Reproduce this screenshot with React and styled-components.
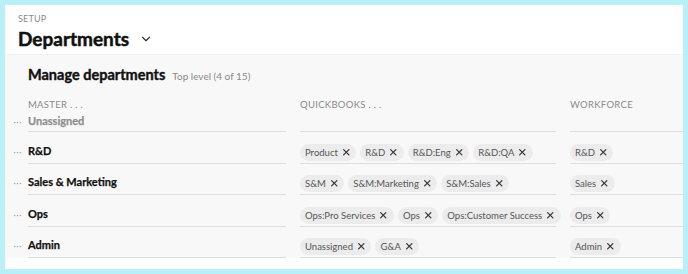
import React from 'react'
import styled, { createGlobalStyle } from 'styled-components'
import { ChevronDown, X } from 'lucide-react'

const GlobalStyle = createGlobalStyle`
  body {
    margin: 0;
    background: #b7f1f7;
    font-family: Lato, "Open Sans", sans-serif;
  }
`

const Frame = styled.div`
  margin: 5px;
  width: 678px;
  height: 264px;
  background: #fdfdfd;
  overflow: hidden;
`

const Header = styled.div`
  background: #ffffff;
  height: 50px;
  padding: 8px 0 0 13px;
  box-sizing: border-box;
  border-bottom: 1px solid #f2f2f2;
`

const Eyebrow = styled.div`
  font-size: 9px;
  line-height: 11px;
  color: #8a8a8a;
  letter-spacing: 0.2px;
`

const TitleRow = styled.div`
  display: flex;
  align-items: center;
  gap: 10px;
  margin-top: 3px;
`

const Title = styled.h1`
  margin: 0;
  font-size: 19px;
  line-height: 24px;
  font-weight: 700;
  color: #111;
  -webkit-text-stroke: 0.5px #111;
`

const Panel = styled.div`
  background: #f8f8f8;
  padding: 10px 0 0 0;
`

const SectionHead = styled.div`
  display: flex;
  align-items: baseline;
  gap: 7px;
  padding-left: 23px;
`

const SectionTitle = styled.h2`
  margin: 0;
  font-size: 14.5px;
  line-height: 20px;
  font-weight: 700;
  color: #111;
  -webkit-text-stroke: 0.4px #111;
`

const SectionNote = styled.span`
  font-size: 10px;
  color: #888;
`

const Row = styled.div`
  display: grid;
  grid-template-columns: 23px 272px 270px 1fr;
`

const Cell = styled.div`
  display: flex;
  align-items: flex-end;
  flex-wrap: nowrap;
  gap: 4px;
  height: ${p => p.$h}px;
  padding-bottom: ${p => p.$pb}px;
  box-sizing: border-box;
  margin-right: ${p => (p.$last ? 0 : 14)}px;
  border-bottom: ${p => (p.$line ? '1px solid #dedede' : 'none')};
  white-space: nowrap;
`

const Dots = styled.div`
  display: flex;
  align-items: flex-end;
  justify-content: flex-end;
  padding: 0 6px ${p => p.$pb + 3}px 0;
  color: #a5a5a5;
  font-size: 9px;
  letter-spacing: 0.5px;
  line-height: 10px;
`

const ColLabel = styled.span`
  font-size: 9.5px;
  line-height: 12px;
  color: #8a8a8a;
  letter-spacing: 0.3px;
`

const Name = styled.span`
  font-size: 11px;
  line-height: 16px;
  font-weight: 700;
  color: ${p => (p.$muted ? '#8f8f8f' : '#111')};
  -webkit-text-stroke: 0.25px ${p => (p.$muted ? '#8f8f8f' : '#111')};
`

const Chip = styled.span`
  display: inline-flex;
  align-items: center;
  gap: 3px;
  height: 17px;
  padding: 0 5px;
  border-radius: 9px;
  background: #ececec;
  color: #555;
  font-size: 9.5px;
  line-height: 17px;
`

const rows = [
  { name: 'R&D', qb: ['Product', 'R&D', 'R&D:Eng', 'R&D:QA'], wf: ['R&D'] },
  { name: 'Sales & Marketing', qb: ['S&M', 'S&M:Marketing', 'S&M:Sales'], wf: ['Sales'] },
  { name: 'Ops', qb: ['Ops:Pro Services', 'Ops', 'Ops:Customer Success'], wf: ['Ops'] },
  { name: 'Admin', qb: ['Unassigned', 'G&A'], wf: ['Admin'] },
]

const Tag = ({ label }) => (
  <Chip>
    {label}
    <X size={10.5} strokeWidth={2.8} color="#333" />
  </Chip>
)

export default function App() {
  return (
    <>
      <GlobalStyle />
      <Frame>
        <Header>
          <Eyebrow>SETUP</Eyebrow>
          <TitleRow>
            <Title>Departments</Title>
            <ChevronDown size={14} strokeWidth={2} color="#333" />
          </TitleRow>
        </Header>
        <Panel>
          <SectionHead>
            <SectionTitle>Manage departments</SectionTitle>
            <SectionNote>Top level (4 of 15)</SectionNote>
          </SectionHead>
          <Row>
            <div />
            <Cell $h={28} $pb={2}><ColLabel>MASTER . . .</ColLabel></Cell>
            <Cell $h={28} $pb={2}><ColLabel>QUICKBOOKS . . .</ColLabel></Cell>
            <Cell $h={28} $pb={2} $last><ColLabel>WORKFORCE</ColLabel></Cell>
          </Row>
          <Row>
            <Dots $pb={2}>···</Dots>
            <Cell $h={19} $pb={2} $line><Name $muted>Unassigned</Name></Cell>
            <Cell $h={19} $pb={2} $line />
            <Cell $h={19} $pb={2} $line $last />
          </Row>
          {rows.map(r => (
            <Row key={r.name}>
              <Dots $pb={4}>···</Dots>
              <Cell $h={31.5} $pb={4} $line><Name>{r.name}</Name></Cell>
              <Cell $h={31.5} $pb={2} $line>
                {r.qb.map(t => <Tag key={t} label={t} />)}
              </Cell>
              <Cell $h={31.5} $pb={2} $line $last>
                {r.wf.map(t => <Tag key={t} label={t} />)}
              </Cell>
            </Row>
          ))}
        </Panel>
      </Frame>
    </>
  )
}
